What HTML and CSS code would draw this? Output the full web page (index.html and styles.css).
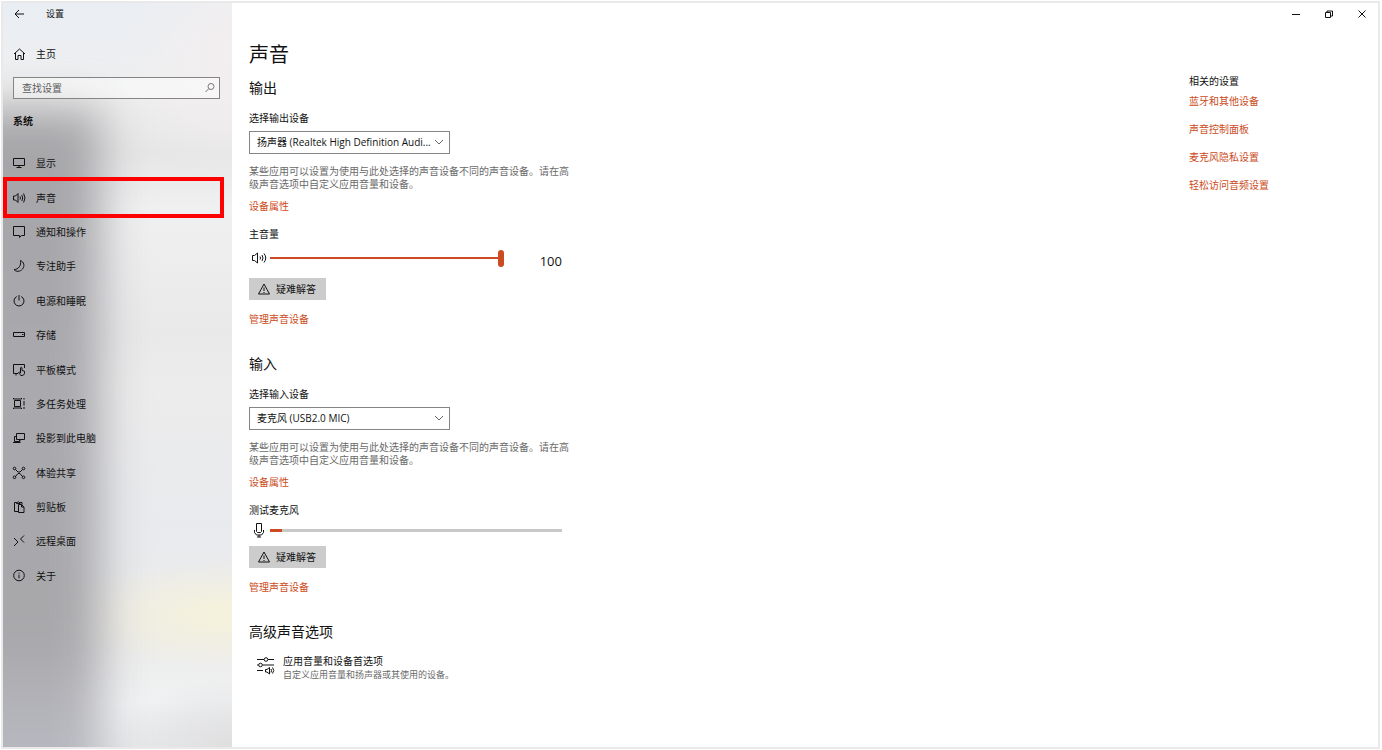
FILE: index.html
```html
<!DOCTYPE html>
<html lang="zh-CN">
<head>
<meta charset="utf-8">
<title>设置</title>
<link rel="stylesheet" href="styles.css">
</head>
<body>
<div class="window">
  <div class="sidebar">
    <div class="app-bar">
      <button class="icon-button" type="button" aria-label="返回">
        <svg class="icon" viewBox="0 0 14 14"><path d="M12 7H3M7 3L3 7l4 4"/></svg>
      </button>
      <span class="app-name">设置</span>
    </div>
    <a class="nav-link home" href="#">
      <svg class="icon" viewBox="0 0 14 14"><path d="M2 7l5.500-5L13 7M3.500 6v6.500h2.500V8.500h3v4h2.500V6"/></svg>
      <span>主页</span>
    </a>
    <div class="search">
      <input class="search-input" type="text" placeholder="查找设置" aria-label="查找设置">
      <svg class="search-icon" viewBox="0 0 12 12"><circle cx="7" cy="4.500" r="3"/><path d="M4.800 6.700L1.500 10"/></svg>
    </div>
    <h2 class="group-title">系统</h2>
    <nav class="nav">
      <a class="nav-link" href="#"><svg class="icon" viewBox="0 0 14 14"><path d="M1.500 2.500h11v7h-11zM7 9.500v2M4.500 11.500h5"/></svg><span>显示</span></a>
      <a class="nav-link current" href="#" aria-current="page"><svg class="icon" viewBox="0 0 14 14"><path d="M1.500 5h2L6 2.500v9L3.500 9h-2zM8 5.500q1 1.500 0 3M9.800 4q1.900 3 0 6M11.600 2.500q2.800 4.500 0 9"/></svg><span>声音</span></a>
      <a class="nav-link" href="#"><svg class="icon" viewBox="0 0 14 14"><path d="M1.500 1.500h11v9H9.500L7.500 12.500V10.500h-6z"/></svg><span>通知和操作</span></a>
      <a class="nav-link" href="#"><svg class="icon" viewBox="0 0 14 14"><path d="M8.500 1.500C12 3 13 7 10.500 10S4 13 2 10.500C6.500 10.500 9.500 6.500 8.500 1.500z"/></svg><span>专注助手</span></a>
      <a class="nav-link" href="#"><svg class="icon" viewBox="0 0 14 14"><path d="M7 1v5.500M4.800 2.500a5 5 0 1 0 4.400 0"/></svg><span>电源和睡眠</span></a>
      <a class="nav-link" href="#"><svg class="icon" viewBox="0 0 14 14"><path d="M1.500 4.500h11v4h-11zM10 6.500h1.500"/></svg><span>存储</span></a>
      <a class="nav-link" href="#"><svg class="icon" viewBox="0 0 14 14"><path d="M6 10.500H1.500v-9h11V5M4 10.500v2M8.500 9V4.800q.8-.9 1.500 0V7.500l2.500.7v2.300q-.5 2-2.500 2H9Q7.500 11.500 6.500 9.500q.8-1 2 .5z"/></svg><span>平板模式</span></a>
      <a class="nav-link" href="#"><svg class="icon" viewBox="0 0 14 14"><path d="M2.500 3.500h6v6h-6zM1.500 1v1h8V1M1.500 12v-1h8v1M12 1v1.500M12 4v4.500M12 10v2"/></svg><span>多任务处理</span></a>
      <a class="nav-link" href="#"><svg class="icon" viewBox="0 0 14 14"><path d="M4.500 2.500h8v6h-8zM4.500 5.500h-2v5h5v-2M1 11.500h7.500M8 8.500v2"/></svg><span>投影到此电脑</span></a>
      <a class="nav-link" href="#"><svg class="icon" viewBox="0 0 14 14"><path d="M3.500 3.500L6 6h2l2.500-2.500M3.500 10.500L6 7.500h2l2.500 3"/><circle cx="2.500" cy="2.500" r="1.300"/><circle cx="11.500" cy="2.500" r="1.300"/><circle cx="2.500" cy="11.300" r="1.300"/><circle cx="11.500" cy="11.300" r="1.300"/></svg><span>体验共享</span></a>
      <a class="nav-link" href="#"><svg class="icon" viewBox="0 0 14 14"><path d="M6.500 11.500h-4v-9h2M8 2.500h2v2M4.500 3.500v-1h1q.8-2 1.600 0h1v1zM6.500 4.500h3l2.500 2.500v5.500H6.500zM9.500 4.500V7H12"/></svg><span>剪贴板</span></a>
      <a class="nav-link" href="#"><svg class="icon" viewBox="0 0 14 14"><path d="M2 4l4 4-4 4M12 1.500L8.500 5 12 8.500"/></svg><span>远程桌面</span></a>
      <a class="nav-link" href="#"><svg class="icon" viewBox="0 0 14 14"><circle cx="7" cy="6.500" r="5.300"/><path d="M7 5.800v3.500M7 3.700v1"/></svg><span>关于</span></a>
    </nav>
  </div>

  <div class="page">
    <div class="caption">
      <button class="caption-button" type="button" aria-label="最小化"><svg viewBox="0 0 10 10"><path d="M1 5.500h8"/></svg></button>
      <button class="caption-button" type="button" aria-label="还原"><svg viewBox="0 0 10 10"><path d="M1.500 3.500h5v5h-5zM3 3.500V2h5.500v5h-2"/></svg></button>
      <button class="caption-button" type="button" aria-label="关闭"><svg viewBox="0 0 10 10"><path d="M1.500 1.500l7 7M8.500 1.500l-7 7"/></svg></button>
    </div>
    <div class="content">
      <main class="settings">
        <h1 class="title">声音</h1>

        <section class="section">
          <h2 class="section-title">输出</h2>
          <label class="label" for="output">选择输出设备</label>
          <div class="select">
            <select class="select-input" id="output"><option>扬声器 (Realtek High Definition Audi...</option></select>
            <svg class="chevron" viewBox="0 0 10 10"><path d="M1 3l4 4 4-4"/></svg>
          </div>
          <p class="hint">某些应用可以设置为使用与此处选择的声音设备不同的声音设备。请在高级声音选项中自定义应用音量和设备。</p>
          <a class="link" href="#">设备属性</a>
          <label class="label volume-label" for="volume">主音量</label>
          <div class="level volume">
            <svg class="level-icon" viewBox="0 0 18 18"><path d="M3.500 6.500h2L8.500 4v10L5.500 11.500h-2zM11 7.500q1 1.500 0 3M13 6q2 3 0 6M15 4.500q3.500 4.500 0 9"/></svg>
            <input class="slider" id="volume" type="range" min="0" max="100" value="100">
            <output class="volume-value" for="volume">100</output>
          </div>
          <button class="button" type="button"><svg class="icon" viewBox="0 0 14 14"><path d="M7 2L1.500 12h11zM7 5.500v3.500M7 10v1"/></svg>疑难解答</button>
          <a class="link manage" href="#">管理声音设备</a>
        </section>

        <section class="section">
          <h2 class="section-title">输入</h2>
          <label class="label" for="input">选择输入设备</label>
          <div class="select">
            <select class="select-input" id="input"><option>麦克风 (USB2.0 MIC)</option></select>
            <svg class="chevron" viewBox="0 0 10 10"><path d="M1 3l4 4 4-4"/></svg>
          </div>
          <p class="hint">某些应用可以设置为使用与此处选择的声音设备不同的声音设备。请在高级声音选项中自定义应用音量和设备。</p>
          <a class="link" href="#">设备属性</a>
          <label class="label volume-label" for="mic">测试麦克风</label>
          <div class="level">
            <svg class="level-icon" viewBox="0 0 18 18"><path d="M7.500 2.500h5v8l-1 1h-3l-1-1zM5.500 9v2.500L7.500 14h5l2-2.500V9M10 14v2M8 16h4"/></svg>
            <progress class="meter" id="mic" max="100" value="4"></progress>
          </div>
          <button class="button" type="button"><svg class="icon" viewBox="0 0 14 14"><path d="M7 2L1.500 12h11zM7 5.500v3.500M7 10v1"/></svg>疑难解答</button>
          <a class="link manage" href="#">管理声音设备</a>
        </section>

        <section class="section">
          <h2 class="section-title">高级声音选项</h2>
          <a class="advanced" href="#">
            <svg class="advanced-icon" viewBox="0 0 20 20"><path d="M1 4.500h7M12 4.500h6M1 10h1.500M6.500 10H18M1 15.500h6"/><circle cx="10" cy="4.500" r="1.800"/><circle cx="4.500" cy="10" r="1.800"/><path d="M9.500 14.500h1.500l2.500-2v6.500l-2.500-2H9.500zM15 14q1 1.700 0 3.500M16.500 12.500q2.500 3 0 6"/></svg>
            <span class="advanced-text">
              <span class="advanced-name">应用音量和设备首选项</span>
              <span class="advanced-note">自定义应用音量和扬声器或其使用的设备。</span>
            </span>
          </a>
        </section>
      </main>

      <aside class="related">
        <h2 class="related-title">相关的设置</h2>
        <a class="link" href="#">蓝牙和其他设备</a>
        <a class="link" href="#">声音控制面板</a>
        <a class="link" href="#">麦克风隐私设置</a>
        <a class="link" href="#">轻松访问音频设置</a>
      </aside>
    </div>
  </div>
</div>
</body>
</html>
```

FILE: styles.css
```css
* {
  box-sizing: border-box;
}

body {
  margin: 0;
  padding: 1px 2px 1px 1px;
  background: #fff;
  color: #111;
  font: 10px/14px "Open Sans", "Noto Sans CJK SC", sans-serif;
}

h1, h2, p {
  margin: 0;
  font-weight: 400;
}

a {
  color: inherit;
  text-decoration: none;
}

button, input, select {
  font: inherit;
  color: inherit;
}

svg {
  display: block;
  flex: none;
  fill: none;
  stroke: currentColor;
  stroke-width: 1;
}

.window {
  display: grid;
  grid-template-columns: 229px 1fr;
  min-height: calc(100vh - 2px);
  border: 2px solid #e9e9e9;
}

/* Sidebar */

.sidebar {
  position: relative;
  z-index: 0;
  overflow: hidden;
  background:
    radial-gradient(ellipse 170px 54px at 100% 612px, #f4f1dd 20%, #f4f1dd00),
    radial-gradient(ellipse 120px 70px at 100% 100%, #dfdfe0, #dfdfe000),
    radial-gradient(ellipse 110px 130px at 100% 50px, #f3eeef, #f3eeef00),
    linear-gradient(#e9eef4, #efefef 90px, #e6e6e7 150px, #f0f0f1 205px, #e9e9ea 330px, #ececec 380px, #e9eaed 520px, #ebebeb 640px, #f1f2f3 700px, #e8e9eb);
}

.sidebar::before {
  content: "";
  position: absolute;
  z-index: -1;
  inset: 106px auto -60px -60px;
  width: 158px;
  background: linear-gradient(#a6a5a8, #a9a9ae 40%, #a8a8ab 75%, #b7b7bf 90%);
  filter: blur(22px);
}

.app-bar {
  display: flex;
  align-items: center;
  gap: 20px;
  height: 22px;
  padding-left: 9px;
}

.app-name {
  font-size: 9px;
}

.icon-button {
  padding: 0;
  border: 0;
  background: none;
}

.icon {
  width: 14px;
  height: 14px;
}

.nav-link {
  position: relative;
  display: flex;
  align-items: center;
  gap: 10px;
  padding-left: 9px;
}

.home {
  height: 34px;
  margin-top: 12px;
}

.search {
  position: relative;
  margin: 6px 12px 0 10px;
}

.search-input {
  display: block;
  width: 100%;
  height: 22px;
  padding: 0 24px 1px 8px;
  border: 1px solid #858585;
  background: rgb(255 255 255 / 45%);
}

.search-input::placeholder {
  color: #5c5c5c;
}

.search-icon {
  position: absolute;
  top: 5px;
  right: 4px;
  width: 12px;
  height: 12px;
  color: #777;
}

.group-title {
  margin: 15px 10px 18px;
  font-size: 10px;
  font-weight: 700;
}

.nav {
  display: flex;
  flex-direction: column;
  min-height: 447px;
}

.nav .nav-link {
  flex: 1;
}

.current::after {
  content: "";
  position: absolute;
  inset: -3px 8px -3px 0;
  border: 4px solid #f00;
}

/* Page */

.caption {
  display: flex;
  justify-content: flex-end;
}

.caption-button {
  display: grid;
  place-items: center;
  width: 33px;
  height: 22px;
  padding: 0;
  border: 0;
  background: none;
}

.caption-button svg {
  width: 10px;
  height: 10px;
}

.content {
  display: flex;
  justify-content: space-between;
  padding: 16px 0 20px 17px;
}

.settings {
  width: 325px;
}

.title {
  margin-bottom: 9px;
  font-size: 20px;
  line-height: 28px;
}

.section {
  display: flex;
  flex-direction: column;
  align-items: flex-start;
  margin-bottom: 28px;
}

.section-title {
  margin-bottom: 13px;
  font-size: 14px;
  line-height: 20px;
}

.select {
  position: relative;
  width: 201px;
  margin: 6px 0 11px;
}

.select-input {
  display: block;
  width: 100%;
  height: 23px;
  padding: 0 16px 2px 7px;
  border: 1px solid #858585;
  border-radius: 0;
  background: #fff;
  appearance: none;
}

.chevron {
  position: absolute;
  top: 6px;
  right: 6px;
  width: 10px;
  height: 10px;
  color: #666;
}

.hint {
  margin-bottom: 8px;
  color: #6a6a6a;
  line-height: 13px;
}

.link {
  color: #cc4b22;
}

.volume-label {
  margin-top: 14px;
}

.level {
  display: flex;
  align-items: center;
  width: 313px;
  height: 26px;
  margin-bottom: 3px;
}

.volume {
  height: 34px;
}

.level-icon {
  width: 18px;
  height: 18px;
  margin-right: 3px;
}

.slider {
  width: 234px;
  height: 18px;
  margin: 0;
  background: linear-gradient(#cc4b22, #cc4b22) center / 100% 2px no-repeat;
  appearance: none;
}

.slider::-webkit-slider-thumb {
  width: 6px;
  height: 17px;
  border-radius: 3px;
  background: #cc4b22;
  appearance: none;
}

.volume-value {
  margin-left: auto;
  padding-top: 6px;
  font-size: 13px;
}

.meter {
  flex: 1;
  height: 3px;
  border: 0;
  background: #c8c8c8;
  appearance: none;
}

.meter::-webkit-progress-bar {
  background: #c8c8c8;
}

.meter::-webkit-progress-value {
  background: #cc4b22;
}

.button {
  display: flex;
  align-items: center;
  gap: 5px;
  height: 22px;
  padding: 0 10px 0 8px;
  border: 0;
  background: #ccc;
}

.manage {
  margin-top: 12px;
}

.advanced {
  display: flex;
  gap: 7px;
  padding-left: 7px;
}

.advanced-icon {
  width: 20px;
  height: 20px;
}

.advanced-text {
  display: flex;
  flex-direction: column;
  line-height: 13px;
}

.advanced-note {
  color: #6a6a6a;
  font-size: 9px;
}

.related {
  display: flex;
  flex-direction: column;
  gap: 14px;
  width: 189px;
  padding-top: 33px;
}

.related-title {
  margin-bottom: -8px;
  font-size: 10px;
}
```
